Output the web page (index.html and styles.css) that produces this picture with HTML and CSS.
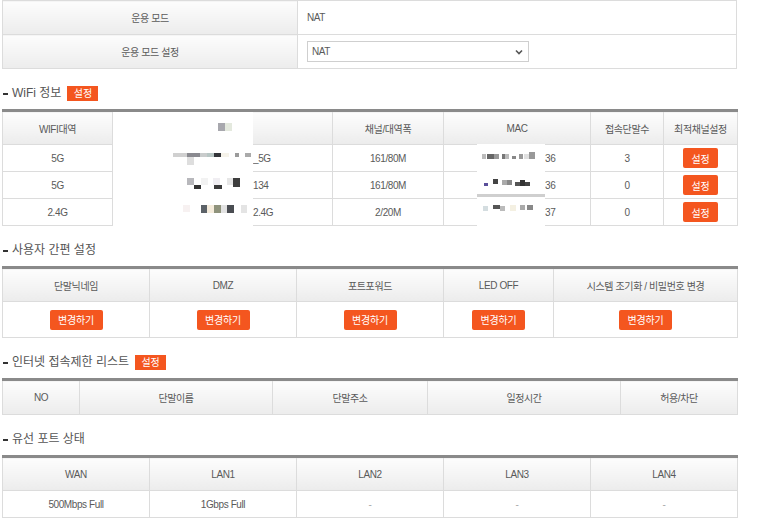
FILE: index.html
```html
<!DOCTYPE html>
<html lang="ko">
  <head>
    <meta charset="UTF-8" />
    <meta name="viewport" content="width=device-width, initial-scale=1.0" />
    <title>기본 설정</title>
    <link rel="stylesheet" href="styles.css">
  </head>
  <body>
    <div id="page">
      <table class="grid mode-table">
        <tr>
          <th class="mode-head">운용 모드</th>
          <td class="mode-value">NAT</td>
        </tr>
        <tr>
          <th class="mode-head">운용 모드 설정</th>
          <td class="mode-value">
            <div class="select-box">
              <select id="mode-select">
                <option>NAT</option>
                <option>Bridge</option>
              </select>
              <svg class="chevron" width="8" height="6" viewBox="0 0 8 6">
                <path d="M1 1.5 L4 4.5 L7 1.5" fill="none" stroke="#555" stroke-width="1.6" />
              </svg>
            </div>
          </td>
        </tr>
      </table>

      <h2 class="section-title">WiFi 정보 <span class="badge">설정</span></h2>
      <div class="masked">
        <table class="grid list wifi">
          <colgroup>
            <col style="width: 110px" />
            <col style="width: 220px" />
            <col style="width: 111px" />
            <col style="width: 147px" />
            <col style="width: 73px" />
            <col style="width: 74px" />
          </colgroup>
          <tr>
            <th>WIFI대역</th>
            <th>SSID</th>
            <th>채널/대역폭</th>
            <th>MAC</th>
            <th>접속단말수</th>
            <th>최적채널설정</th>
          </tr>
          <tr>
            <td>5G</td>
            <td class="ssid">_5G</td>
            <td>161/80M</td>
            <td class="mac">36</td>
            <td>3</td>
            <td><button class="btn small">설정</button></td>
          </tr>
          <tr>
            <td>5G</td>
            <td class="ssid">134</td>
            <td>161/80M</td>
            <td class="mac">36</td>
            <td>0</td>
            <td><button class="btn small">설정</button></td>
          </tr>
          <tr>
            <td>2.4G</td>
            <td class="ssid">2.4G</td>
            <td>2/20M</td>
            <td class="mac">37</td>
            <td>0</td>
            <td><button class="btn small">설정</button></td>
          </tr>
        </table>

        <!-- redacted ssid / mac -->
        <svg class="mask mask-ssid" width="140" height="117" viewBox="0 0 140 117">
          <rect width="140" height="117" fill="#fff" />
          <rect x="105" y="11" width="7" height="8" fill="#a8a8ae" />
          <rect x="112" y="11" width="7" height="8" fill="#e4e9de" />
          <rect x="60" y="41" width="14" height="4" fill="#d0d0d0" />
          <rect x="74" y="41" width="13" height="4" fill="#8a8a90" />
          <rect x="87" y="41" width="7" height="4" fill="#c9cccc" />
          <rect x="94" y="41" width="7" height="4" fill="#b8c6c4" />
          <rect x="101" y="41" width="7" height="4" fill="#33353a" />
          <rect x="108" y="41" width="8" height="4" fill="#f6f3ea" />
          <rect x="122" y="41" width="4" height="4" fill="#9b9b9b" />
          <rect x="132" y="41" width="6" height="4" fill="#aaaaaa" />
          <rect x="74" y="45" width="7" height="8" fill="#dedede" />
          <rect x="74" y="66" width="7" height="7" fill="#b8b8bc" />
          <rect x="81" y="73" width="7" height="4" fill="#333" />
          <rect x="88" y="66" width="7" height="7" fill="#f2f2f2" />
          <rect x="100" y="66" width="7" height="7" fill="#f0eef2" />
          <rect x="101" y="73" width="8" height="4" fill="#3a3a3a" />
          <rect x="114" y="66" width="7" height="7" fill="#e6e6e6" />
          <rect x="120" y="66" width="7" height="9" fill="#3d3d3d" />
          <rect x="70" y="93" width="7" height="7" fill="#f7f1f1" />
          <rect x="88" y="93" width="6" height="8" fill="#5c6268" />
          <rect x="94" y="93" width="7" height="8" fill="#f5ecdc" />
          <rect x="101" y="93" width="7" height="8" fill="#8f937c" />
          <rect x="108" y="93" width="6" height="8" fill="#e2e2e2" />
          <rect x="114" y="93" width="7" height="8" fill="#4a4d52" />
          <rect x="128" y="93" width="6" height="8" fill="#e4e4e4" />
        </svg>
        <svg class="mask mask-mac" width="68" height="85" viewBox="0 0 68 85">
          <rect width="68" height="85" fill="#fff" />
          <rect x="5" y="10" width="4" height="5" fill="#bbb" />
          <rect x="10" y="10" width="7" height="5" fill="#666" />
          <rect x="17" y="10" width="5" height="5" fill="#999" />
          <rect x="25" y="10" width="3" height="5" fill="#777" />
          <rect x="28" y="10" width="4" height="5" fill="#bbb" />
          <rect x="35" y="12" width="4" height="3" fill="#888" />
          <rect x="42" y="10" width="4" height="5" fill="#999" />
          <rect x="47" y="10" width="5" height="5" fill="#e0e0e0" />
          <rect x="52" y="8" width="6" height="7" fill="#999" />
          <rect x="7" y="39" width="4" height="3" fill="#5a4f9a" />
          <rect x="16" y="35" width="5" height="5" fill="#444" />
          <rect x="25" y="36" width="5" height="5" fill="#aaa" />
          <rect x="30" y="36" width="5" height="5" fill="#888" />
          <rect x="38" y="38" width="5" height="4" fill="#555" />
          <rect x="43" y="36" width="5" height="6" fill="#333" />
          <rect x="48" y="38" width="5" height="4" fill="#444" />
          <rect x="0" y="50" width="68" height="3" fill="#cfcfcf" />
          <rect x="6" y="62" width="5" height="5" fill="#d4dde0" />
          <rect x="16" y="61" width="7" height="4" fill="#555" />
          <rect x="23" y="62" width="5" height="5" fill="#bbb" />
          <rect x="33" y="61" width="6" height="6" fill="#f4f0e2" />
          <rect x="43" y="61" width="5" height="5" fill="#aaa" />
          <rect x="50" y="61" width="6" height="5" fill="#888" />
        </svg>
      </div>

      <h2 class="section-title">사용자 간편 설정</h2>
      <table class="grid list quick">
        <colgroup>
          <col style="width: 147px" />
          <col style="width: 147px" />
          <col style="width: 147px" />
          <col style="width: 110px" />
          <col style="width: 184px" />
        </colgroup>
        <tr>
          <th>단말닉네임</th>
          <th>DMZ</th>
          <th>포트포워드</th>
          <th>LED OFF</th>
          <th>시스템 조기화 / 비밀번호 변경</th>
        </tr>
        <tr>
          <td><button class="btn">변경하기</button></td>
          <td><button class="btn">변경하기</button></td>
          <td><button class="btn">변경하기</button></td>
          <td><button class="btn">변경하기</button></td>
          <td><button class="btn">변경하기</button></td>
        </tr>
      </table>

      <h2 class="section-title">인터넷 접속제한 리스트 <span class="badge">설정</span></h2>
      <table class="grid list blocked">
        <colgroup>
          <col style="width: 77px" />
          <col style="width: 193px" />
          <col style="width: 155px" />
          <col style="width: 193px" />
          <col style="width: 117px" />
        </colgroup>
        <tr>
          <th>NO</th>
          <th>단말이름</th>
          <th>단말주소</th>
          <th>일정시간</th>
          <th>허용/차단</th>
        </tr>
      </table>

      <h2 class="section-title">유선 포트 상태</h2>
      <table class="grid list ports">
        <colgroup>
          <col style="width: 147px" />
          <col style="width: 147px" />
          <col style="width: 147px" />
          <col style="width: 147px" />
          <col style="width: 147px" />
        </colgroup>
        <tr>
          <th>WAN</th>
          <th>LAN1</th>
          <th>LAN2</th>
          <th>LAN3</th>
          <th>LAN4</th>
        </tr>
        <tr>
          <td>500Mbps Full</td>
          <td>1Gbps Full</td>
          <td class="dim">-</td>
          <td class="dim">-</td>
          <td class="dim">-</td>
        </tr>
      </table>
    </div>
  </body>
</html>
```

FILE: styles.css
```css
/* Reset */
* {
  margin: 0;
  padding: 0;
  box-sizing: border-box;
}

body {
  font-family: 'Liberation Sans', 'Noto Sans CJK KR', sans-serif;
  font-size: 10px;
  letter-spacing: -0.4px;
  color: #5a5a5a;
  background-color: #fff;
}

#page {
  width: 735px;
  margin-left: 2px;
}

/* Tables */
.grid {
  width: 735px;
  border-collapse: collapse;
  table-layout: fixed;
}

.grid th,
.grid td {
  border: 1px solid #dcdcdc;
  text-align: center;
  font-weight: normal;
  vertical-align: middle;
}

.grid th {
  background: linear-gradient(#fdfdfd, #ececec);
  color: #5a5a5a;
  height: 34px;
}

.grid td {
  background-color: #fff;
  height: 27px;
}

.list {
  border-top: 3px solid #8a8a8a;
}

.list tr:first-child th {
  border-top: none;
}

/* Operation mode */
.mode-table th.mode-head {
  width: 295px;
  height: 34px;
}

.mode-table td.mode-value {
  text-align: left;
  padding-left: 9px;
  height: 34px;
}

.select-box {
  position: relative;
  width: 222px;
  height: 21px;
}

.select-box select {
  appearance: none;
  -webkit-appearance: none;
  width: 100%;
  height: 100%;
  border: 1px solid #cfcfcf;
  border-radius: 0;
  background-color: #fff;
  padding-left: 4px;
  font-family: inherit;
  font-size: 10px;
  letter-spacing: -0.4px;
  color: #5a5a5a;
}

.chevron {
  position: absolute;
  right: 6px;
  top: 8px;
  pointer-events: none;
}

/* Section titles */
.section-title {
  font-size: 12px;
  letter-spacing: 0;
  font-weight: normal;
  color: #555;
  line-height: 20px;
  height: 20px;
  margin: 14px 0 6px;
  padding-left: 10px;
  position: relative;
  display: flex;
  align-items: center;
}

.section-title::before {
  content: '';
  position: absolute;
  left: 1px;
  top: 10px;
  width: 5px;
  height: 2px;
  background-color: #333;
}

.badge {
  display: inline-block;
  margin-left: 6px;
  width: 31px;
  height: 15px;
  line-height: 15px;
  text-align: center;
  background-color: #f4561f;
  color: #fff;
  font-size: 10px;
}

/* Buttons */
.btn {
  border: none;
  border-radius: 2px;
  background-color: #f4561f;
  color: #fff;
  font-family: inherit;
  font-size: 10px;
  letter-spacing: -0.2px;
  width: 53px;
  height: 20px;
  cursor: pointer;
}

.btn.small {
  width: 35px;
}

.quick td {
  height: 36px;
}

.blocked th {
  height: 35px;
}

.ports td.dim {
  color: #aaa;
}

/* WiFi redaction */
.masked {
  position: relative;
}

.wifi td.ssid {
  text-align: left;
  padding-left: 140px;
}

.wifi td.mac {
  text-align: left;
  padding-left: 101px;
}

.mask {
  position: absolute;
}

.mask-ssid {
  left: 111px;
  top: 3px;
}

.mask-mac {
  left: 475px;
  top: 35px;
}
```
